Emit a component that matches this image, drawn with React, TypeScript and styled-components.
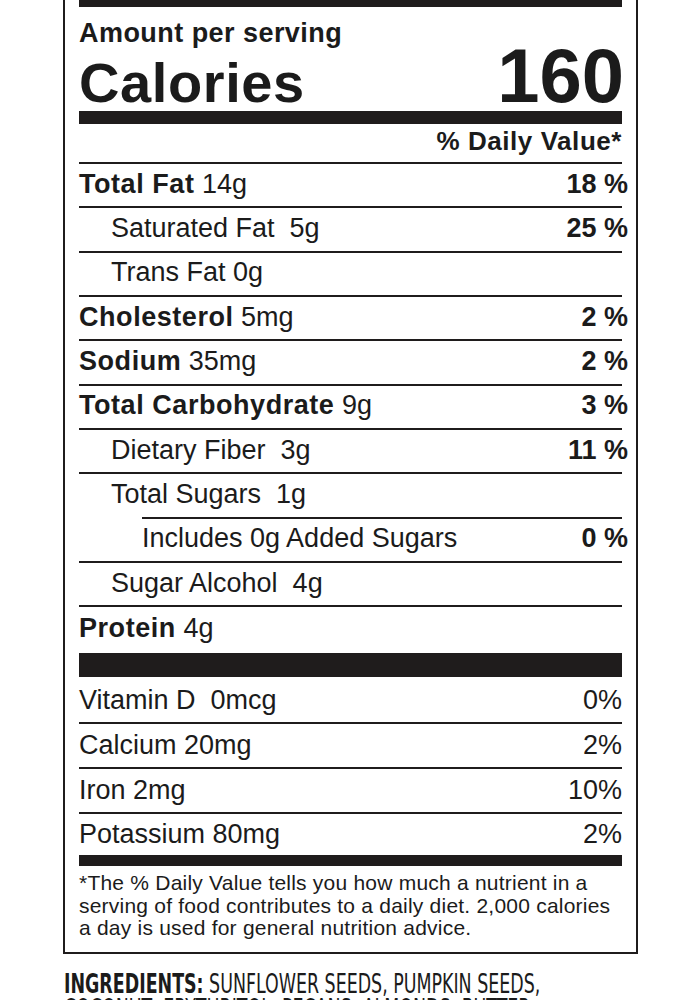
import React from "react";
import styled, { createGlobalStyle } from "styled-components";

const GlobalStyle = createGlobalStyle`
  html, body { margin: 0; padding: 0; background: #ffffff; }
  body {
    font-family: "Liberation Sans", Arial, Helvetica, sans-serif;
    color: #1b1b1b;
    overflow: hidden;
  }
`;

const INK = "#1f1c1c";

const Page = styled.div`
  width: 700px;
  height: 1000px;
  overflow: hidden;
  box-sizing: border-box;
  padding-left: 63px;
`;

const Label = styled.section`
  width: 575px;
  box-sizing: border-box;
  border: 2px solid ${INK};
  border-top: none;
  padding: 0 14px;
`;

const Bar = styled.div<{ $h: number }>`
  height: ${(p) => p.$h}px;
  background: ${INK};
`;

const ServingTitle = styled.div`
  padding-top: 12.6px;
  font-weight: 700;
  font-size: 27px;
  line-height: 27px;
  letter-spacing: 0.45px;
`;

const CaloriesRow = styled.div`
  display: flex;
  justify-content: space-between;
  align-items: baseline;
  height: 64px;
  font-weight: 700;
`;

const CaloriesLabel = styled.span`
  font-size: 56px;
  line-height: 57px;
  letter-spacing: 0.6px;
  margin-top: -2px;
`;

const CaloriesValue = styled.span`
  font-size: 76px;
  line-height: 57px;
  margin-right: -2px;
`;

const DvHeader = styled.div`
  display: flex;
  justify-content: flex-end;
  align-items: center;
  height: 40.3px;
  padding-bottom: 2px;
  box-sizing: border-box;
  border-bottom: 2px solid ${INK};
  font-weight: 700;
  font-size: 26px;
  letter-spacing: 0.55px;
`;

const Row = styled.div<{ $indent?: number; $inset?: number; $h?: number; $top?: number }>`
  display: flex;
  justify-content: space-between;
  align-items: center;
  height: ${(p) => p.$h ?? 40.34}px;
  margin-left: ${(p) => p.$inset ?? 0}px;
  padding-left: ${(p) => p.$indent ?? 0}px;
  padding-top: ${(p) => p.$top ?? 0}px;
  padding-bottom: 2px;
  box-sizing: content-box;
  font-size: 27px;
  white-space: pre;

  & + & {
    border-top: 2px solid ${INK};
  }
`;

const Name = styled.span`
  font-weight: 700;
  letter-spacing: 0.55px;
`;

const Dv = styled.span<{ $bold?: boolean }>`
  font-weight: ${(p) => (p.$bold ? 700 : 400)};
  margin-right: ${(p) => (p.$bold ? -6 : 0)}px;
`;

const VitaminRow = styled(Row)`
  padding-bottom: 0;
`;

const Footnote = styled.p`
  margin: 0;
  padding: 6.4px 0 12.4px;
  font-size: 21px;
  line-height: 22.6px;
  letter-spacing: 0.22px;
`;

const Ingredients = styled.div`
  margin-top: 17.6px;
  margin-left: 1px;
  font-family: "Liberation Sans Narrow", "Arial Narrow", "DejaVu Sans Condensed", sans-serif;
  font-size: 26px;
  line-height: 25px;
  white-space: nowrap;
  transform: scaleX(0.745);
  transform-origin: 0 0;
`;

const IngTitle = styled.span`
  font-weight: 700;
`;

type Nutrient = {
  name?: string;
  amount: string;
  dv?: string;
  indent?: number;
  inset?: number;
  h?: number;
};

const nutrients: Nutrient[] = [
  { name: "Total Fat", amount: " 14g", dv: "18 %", h: 40.4 },
  { amount: "Saturated Fat  5g", dv: "25 %", indent: 32 },
  { amount: "Trans Fat 0g", indent: 32 },
  { name: "Cholesterol", amount: " 5mg", dv: "2 %" },
  { name: "Sodium", amount: " 35mg", dv: "2 %" },
  { name: "Total Carbohydrate", amount: " 9g", dv: "3 %" },
  { amount: "Dietary Fiber  3g", dv: "11 %", indent: 32 },
  { amount: "Total Sugars  1g", indent: 32 },
  { amount: "Includes 0g Added Sugars", dv: "0 %", inset: 63 },
  { amount: "Sugar Alcohol  4g", indent: 32 },
  { name: "Protein", amount: " 4g", h: 43.3 },
];

const vitamins = [
  { label: "Vitamin D  0mcg", dv: "0%", h: 42.3, top: 3 },
  { label: "Calcium 20mg", dv: "2%", h: 42.7, top: 0 },
  { label: "Iron 2mg", dv: "10%", h: 43, top: 0 },
  { label: "Potassium 80mg", dv: "2%", h: 41, top: 0 },
];

export default function App() {
  return (
    <>
      <GlobalStyle />
      <Page>
        <Label>
          <Bar $h={7} />
          <ServingTitle>Amount per serving</ServingTitle>
          <CaloriesRow>
            <CaloriesLabel>Calories</CaloriesLabel>
            <CaloriesValue>160</CaloriesValue>
          </CaloriesRow>
          <Bar $h={13} />
          <DvHeader>% Daily Value*</DvHeader>
          <div>
            {nutrients.map((n, i) => (
              <Row key={i} $indent={n.indent} $inset={n.inset} $h={n.h}>
                <span>
                  {n.name && <Name>{n.name}</Name>}
                  {n.amount}
                </span>
                {n.dv && <Dv $bold>{n.dv}</Dv>}
              </Row>
            ))}
          </div>
          <Bar $h={24} />
          <div>
            {vitamins.map((v) => (
              <VitaminRow key={v.label} $h={v.h} $top={v.top}>
                <span>{v.label}</span>
                <Dv>{v.dv}</Dv>
              </VitaminRow>
            ))}
          </div>
          <Bar $h={11} />
          <Footnote>
            *The % Daily Value tells you how much a nutrient in a
            <br />
            serving of food contributes to a daily diet. 2,000 calories
            <br />
            a day is used for general nutrition advice.
          </Footnote>
        </Label>
        <Ingredients>
          <IngTitle>INGREDIENTS:</IngTitle> SUNFLOWER SEEDS, PUMPKIN SEEDS,
          <br />
          COCONUT, ERYTHRITOL, PECANS, ALMONDS, BUTTER,
        </Ingredients>
      </Page>
    </>
  );
}
